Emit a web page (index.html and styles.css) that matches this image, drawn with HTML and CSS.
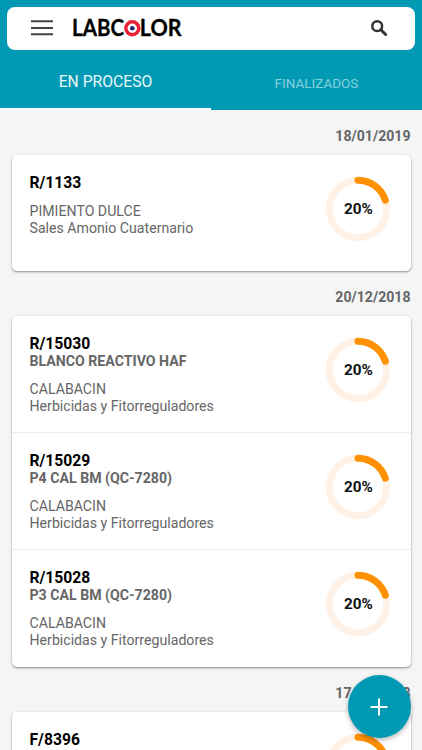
FILE: index.html
```html
<!DOCTYPE html>
<html lang="es">
<head>
<meta charset="utf-8">
<title>Labcolor</title>
<link rel="stylesheet" href="styles.css">
</head>
<body>
<div class="app">
  <header class="header">
    <div class="toolbar">
      <svg class="menu" width="22" height="16" viewBox="0 0 22 16"><path d="M0 1.3H22M0 8H22M0 14.3H22"/></svg>
      <svg class="logo" width="116" height="34" viewBox="-2 -5 116 34">
        <text x="0" y="20" textLength="52" lengthAdjust="spacingAndGlyphs">LABC</text>
        <circle cx="60.3" cy="12.3" r="8.2" fill="#ec2036"/>
        <circle cx="60.3" cy="12.3" r="4.7" fill="#fff"/>
        <circle cx="60.3" cy="12.3" r="2.3" fill="#25286b"/>
        <text x="67.8" y="20" textLength="41.7" lengthAdjust="spacingAndGlyphs">LOR</text>
      </svg>
      <svg class="search" width="16" height="16" viewBox="0 0 16 16"><circle cx="6.2" cy="6.2" r="4.9"/><path d="M9.7 9.7L14.7 14.5"/></svg>
    </div>
    <nav class="tabs">
      <div class="tab active"><span>EN PROCESO</span></div>
      <div class="tab"><span>FINALIZADOS</span></div>
    </nav>
  </header>
  <main class="list">
    <div class="date">18/01/2019</div>
    <section class="card">
      <article class="row">
        <div class="info"><h2>R/1133</h2><p class="crop">PIMIENTO DULCE</p><p>Sales Amonio Cuaternario</p></div>
        <div class="ring"><svg width="66" height="66" viewBox="0 0 66 66"><circle cx="33" cy="33" r="28.7"/><path d="M33 4.3A28.7 28.7 0 0 1 60.3 24.1"/></svg><span>20%</span></div>
      </article>
    </section>
    <div class="date">20/12/2018</div>
    <section class="card">
      <article class="row">
        <div class="info"><h2>R/15030</h2><h3>BLANCO REACTIVO HAF</h3><p class="crop">CALABACIN</p><p>Herbicidas y Fitorreguladores</p></div>
        <div class="ring"><svg width="66" height="66" viewBox="0 0 66 66"><circle cx="33" cy="33" r="28.7"/><path d="M33 4.3A28.7 28.7 0 0 1 60.3 24.1"/></svg><span>20%</span></div>
      </article>
      <article class="row">
        <div class="info"><h2>R/15029</h2><h3>P4 CAL BM (QC-7280)</h3><p class="crop">CALABACIN</p><p>Herbicidas y Fitorreguladores</p></div>
        <div class="ring"><svg width="66" height="66" viewBox="0 0 66 66"><circle cx="33" cy="33" r="28.7"/><path d="M33 4.3A28.7 28.7 0 0 1 60.3 24.1"/></svg><span>20%</span></div>
      </article>
      <article class="row">
        <div class="info"><h2>R/15028</h2><h3>P3 CAL BM (QC-7280)</h3><p class="crop">CALABACIN</p><p>Herbicidas y Fitorreguladores</p></div>
        <div class="ring"><svg width="66" height="66" viewBox="0 0 66 66"><circle cx="33" cy="33" r="28.7"/><path d="M33 4.3A28.7 28.7 0 0 1 60.3 24.1"/></svg><span>20%</span></div>
      </article>
    </section>
    <div class="date">17/12/2018</div>
    <section class="card">
      <article class="row">
        <div class="info"><h2>F/8396</h2></div>
        <div class="ring"><svg width="66" height="66" viewBox="0 0 66 66"><circle cx="33" cy="33" r="28.7"/><path d="M33 4.3A28.7 28.7 0 0 1 60.3 24.1"/></svg></div>
      </article>
    </section>
  </main>
  <div class="fab"><svg width="18" height="18" viewBox="0 0 18 18"><path d="M9 0.5V17.5M0.5 9H17.5"/></svg></div>
</div>
</body>
</html>
```
FILE: styles.css
```css
* { box-sizing: border-box; }
body { margin: 0; overflow: hidden; font-family: Roboto, "Liberation Sans", sans-serif; }
.app { position: relative; height: 750px; overflow: hidden; background: #f5f5f5; }
.header { height: 110px; padding: 7px 7px 0; background: #0199b3; }
.toolbar { display: flex; align-items: center; height: 42.5px; padding: 0 28px 0 24px; background: #fff; border-radius: 8px; }
.menu { margin-top: -1px; stroke: #444; stroke-width: 2; }
.logo { margin-left: 17px; overflow: visible; font: 700 22px Lato, sans-serif; stroke-width: .3; }
.logo text { stroke: #000; }
.search { margin: -1px 0 0 auto; fill: none; stroke: #333; stroke-width: 2.5; }
.search path { stroke-width: 3; stroke-linecap: round; }
.tabs { display: flex; margin: 0 -7px; height: 60.5px; }
.tab { flex: 1; display: flex; align-items: center; justify-content: center; padding-top: 7px; font-size: 13.5px; color: #86d0dc; }
.tab.active { font-size: 15.7px; color: #e9f8fa; padding-top: 5px; border-bottom: 2.5px solid #f8ffff; }
.list { padding: 0 11.5px; }
.date { height: 45px; padding-top: 17px; line-height: 18px; text-align: right; font-size: 14.1px; font-weight: 700; color: #666; }
.card { background: #fff; border-radius: 5px; box-shadow: 0 1px 2px rgba(0,0,0,.38), 0 1px 4px rgba(0,0,0,.08); }
.row { display: flex; justify-content: space-between; height: 116px; padding: 19px 20px 0 18px; }
.row + .row { height: 117px; border-top: 1px solid #ececec; }
.row + .row:last-child { height: 118px; }
h2, h3, p { margin: 0; font-size: 14.15px; line-height: 17px; white-space: nowrap; color: #666; }
h2 { font-size: 15.7px; line-height: 18px; color: #000; }
h3 { font-weight: 700; }
p { font-weight: 400; }
.crop { margin-top: 11px; }
.ring { display: grid; place-items: center; width: 66px; height: 66px; margin-top: 2px; font-size: 15.3px; font-weight: 700; color: #111; }
.ring svg, .ring span { grid-area: 1 / 1; }
.ring span { padding-left: 2px; }
.ring svg { fill: none; stroke-width: 7; }
.ring circle { stroke: #fff1e6; }
.ring path { stroke: #ff9100; stroke-linecap: round; }
.fab { position: absolute; right: 11.5px; bottom: 12px; width: 63px; height: 63px; display: grid; place-items: center; border-radius: 50%; background: #0199b3; box-shadow: 0 2px 5px rgba(0,0,0,.3); }
.fab svg { stroke: #fff; stroke-width: 2; }
```
